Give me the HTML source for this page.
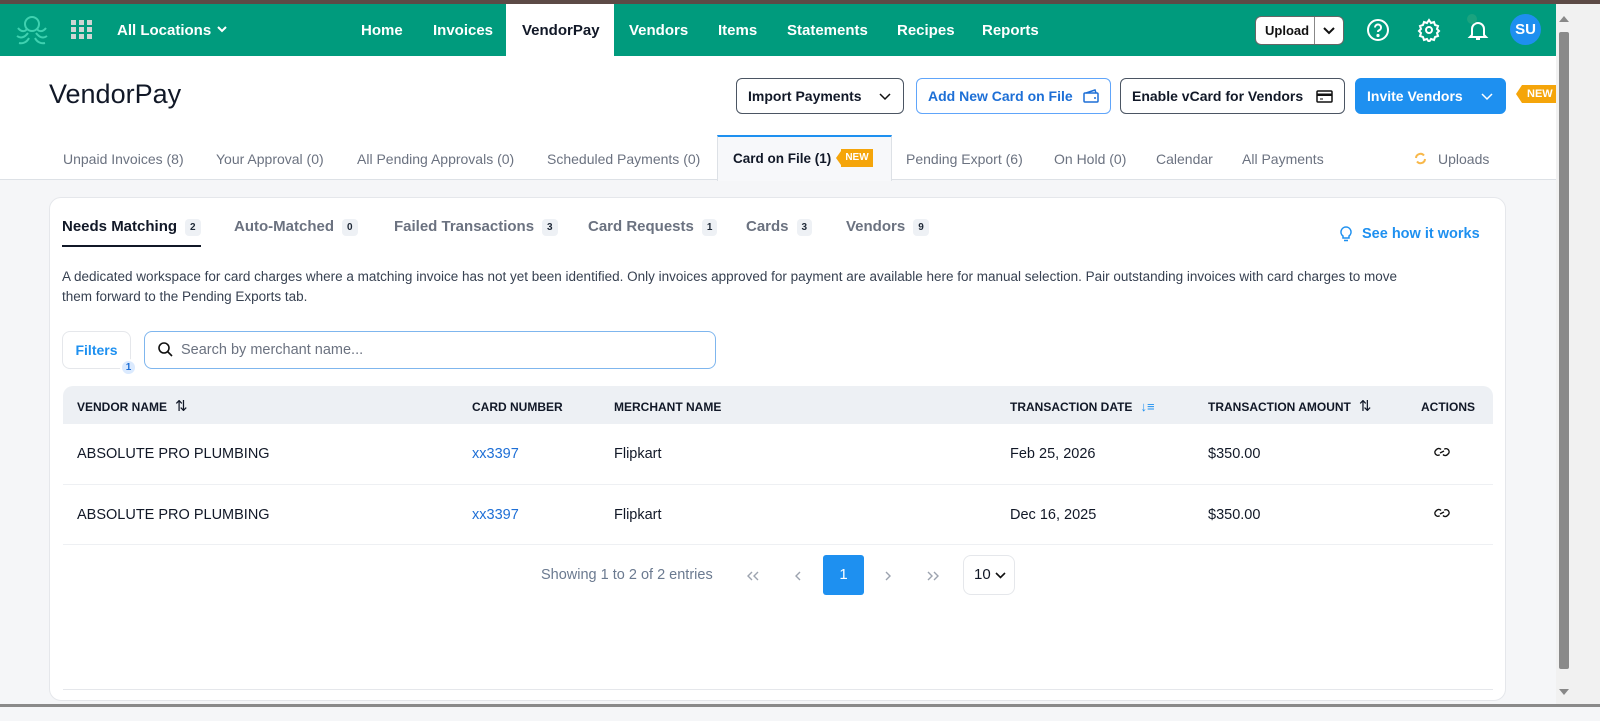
<!DOCTYPE html>
<html><head><meta charset="utf-8"><style>
*{box-sizing:border-box;margin:0;padding:0}
body{width:1600px;height:721px;overflow:hidden;font-family:"Liberation Sans",Arial,sans-serif;background:#f5f6f8;position:relative;color:#1f2937}
.a{position:absolute;white-space:nowrap}
.top{position:absolute;left:0;top:0;width:1600px;height:4px;background:#5c4a46}
.hdr{position:absolute;left:0;top:4px;width:1556px;height:52px;background:#009b7d}
.nav{color:#fff;font-weight:bold;font-size:15px;top:22px}
.white{position:absolute;left:0;top:56px;width:1556px;height:124px;background:#fff;border-bottom:1px solid #dde1e6}
.btn{position:absolute;top:78px;height:36px;border:1px solid #4b5563;border-radius:6px;font-weight:bold;font-size:14px;display:flex;align-items:center;justify-content:space-between;padding:0 11px;background:#fff;color:#111827;white-space:nowrap}
.tab{top:151px;font-size:14px;color:#6b7280}
.card{position:absolute;left:49px;top:197px;width:1457px;height:504px;background:#fff;border:1px solid #e5e7eb;border-radius:12px}
.st{top:218px;font-size:15px;color:#6b7280;font-weight:bold}
.bd{display:inline-block;background:#eef1f5;border-radius:4px;font-size:10px;font-weight:bold;color:#1f2937;padding:3px 5px;margin-left:8px;vertical-align:1px}
.th{font-size:12px;font-weight:bold;color:#111827;top:400px;line-height:14px}
.th span{font-size:15px;font-weight:normal;line-height:14px;vertical-align:top;margin-left:8px}
.td{font-size:14.5px;color:#111827}
.sb{position:absolute;left:1556px;top:4px;width:44px;height:700px;background:#f1f1f1}
</style></head><body>
<div class="top"></div>
<div class="hdr"></div>
<svg class="a" style="left:14px;top:14px" width="36" height="32" viewBox="0 0 36 32" fill="none" stroke="#3fd1b0" stroke-width="2"><circle cx="18" cy="10" r="7"/><path d="M4 14c3 4 7 4 9 1M32 14c-3 4-7 4-9 1M3 22c4 3 8 1 11-3M33 22c-4 3-8 1-11-3M5 29c4 1 8-1 10-5M31 29c-4 1-8-1-10-5"/></svg>
<svg class="a" style="left:71px;top:20px" width="21" height="19" viewBox="0 0 21 19" fill="#cfd5d3"><rect x="0" y="0" width="5" height="5"/><rect x="8" y="0" width="5" height="5"/><rect x="16" y="0" width="5" height="5"/><rect x="0" y="7" width="5" height="5"/><rect x="8" y="7" width="5" height="5"/><rect x="16" y="7" width="5" height="5"/><rect x="0" y="14" width="5" height="5"/><rect x="8" y="14" width="5" height="5"/><rect x="16" y="14" width="5" height="5"/></svg>
<div class="a nav" style="left:117px">All Locations</div>
<svg class="a" style="left:216px;top:25px" width="12" height="8" viewBox="0 0 12 8"><path d="M2 2l4 4 4-4" stroke="#fff" stroke-width="2" fill="none"/></svg>
<div class="a nav" style="left:361px">Home</div>
<div class="a nav" style="left:433px">Invoices</div>
<div class="a" style="left:506px;top:4px;width:108px;height:52px;background:#fff"></div>
<div class="a nav" style="left:522px;color:#111827">VendorPay</div>
<div class="a nav" style="left:629px">Vendors</div>
<div class="a nav" style="left:718px">Items</div>
<div class="a nav" style="left:787px">Statements</div>
<div class="a nav" style="left:897px">Recipes</div>
<div class="a nav" style="left:982px">Reports</div>
<div class="a" style="left:1255px;top:16px;width:89px;height:29px;background:#fff;border-radius:6px;border:1px solid #666;font-size:13px;font-weight:bold;color:#111">
<span class="a" style="left:9px;top:6px">Upload</span><span class="a" style="left:58px;top:0;height:27px;border-left:1px solid #888"></span>
<svg class="a" style="left:66px;top:9px" width="14" height="10" viewBox="0 0 14 10"><path d="M2 2l5 5 5-5" stroke="#111" stroke-width="2" fill="none"/></svg></div>
<svg class="a" style="left:1366px;top:18px" width="24" height="24" viewBox="0 0 24 24" fill="none" stroke="#fff" stroke-width="2"><circle cx="12" cy="12" r="10"/><path d="M9 9.5a3 3 0 1 1 4 2.8c-.8.4-1 1-1 1.7"/><circle cx="12" cy="17.5" r=".6" fill="#fff"/></svg>
<svg class="a" style="left:1417px;top:18px" width="24" height="24" viewBox="0 0 24 24" fill="none" stroke="#fff" stroke-width="2"><circle cx="12" cy="12" r="3"/><path d="M12 2l2 3 3-1 1 3 3 1-1 3 2 2-2 2 1 3-3 1-1 3-3-1-2 3-2-3-3 1-1-3-3-1 1-3-2-2 2-2-1-3 3-1 1-3 3 1z"/></svg>
<svg class="a" style="left:1466px;top:18px" width="24" height="24" viewBox="0 0 24 24" fill="none" stroke="#fff" stroke-width="2"><path d="M6 17V11a6 6 0 0 1 12 0v6l2 2H4zM10 21h4"/></svg>
<div class="a" style="left:1467px;top:14px;width:10px;height:10px;border-radius:5px;background:#1aa37f"></div>
<div class="a" style="left:1510px;top:14px;width:31px;height:31px;border-radius:50%;background:#1e8ff0;color:#fff;font-weight:bold;font-size:15px;text-align:center;line-height:31px">SU</div>
<div class="white"></div>
<div class="a" style="left:49px;top:79px;font-size:27px;color:#111827">VendorPay</div>
<div class="btn" style="left:736px;width:168px">Import Payments <svg width="14" height="9" viewBox="0 0 14 9"><path d="M2 2l5 5 5-5" stroke="#111" stroke-width="1.5" fill="none"/></svg></div>
<div class="btn" style="left:916px;width:195px;border-color:#60a5fa;color:#1d6fd6">Add New Card on File <svg width="16" height="14" viewBox="0 0 16 14" fill="none" stroke="#1d6fd6" stroke-width="1.5"><rect x="1" y="4" width="14" height="9" rx="1"/><path d="M3 4l9-3 1 3M11 9h2"/></svg></div>
<div class="btn" style="left:1120px;width:225px">Enable vCard for Vendors <svg width="17" height="13" viewBox="0 0 17 13"><rect x="1" y="1" width="15" height="11" rx="1" stroke="#111" stroke-width="1.5" fill="none"/><rect x="1" y="3.5" width="15" height="2.5" fill="#111"/><path d="M4 9h3" stroke="#111"/></svg></div>
<div class="btn" style="left:1355px;width:151px;background:#1e90f0;border-color:#1e90f0;color:#fff">Invite Vendors <svg width="14" height="9" viewBox="0 0 14 9"><path d="M2 2l5 5 5-5" stroke="#fff" stroke-width="1.5" fill="none"/></svg></div>
<div class="a" style="left:1516px;top:85px;width:6px;height:0;border-top:9px solid transparent;border-bottom:9px solid transparent;border-right:6px solid #f5a50a"></div>
<div class="a" style="left:1522px;top:85px;width:34px;height:18px;background:#f5a50a;color:#fff;font-size:11px;font-weight:bold;line-height:18px;padding-left:5px">NEW</div>
<div class="a tab" style="left:63px">Unpaid Invoices (8)</div>
<div class="a tab" style="left:216px">Your Approval (0)</div>
<div class="a tab" style="left:357px">All Pending Approvals (0)</div>
<div class="a tab" style="left:547px">Scheduled Payments (0)</div>
<div class="a" style="left:717px;top:135px;width:175px;height:46px;background:#f7f8fa;border:1px solid #dde1e6;border-top:2px solid #1e90f0;border-bottom:none"></div>
<div class="a tab" style="left:733px;color:#111827;font-weight:bold;font-size:13.5px">Card on File (1)</div>
<div class="a" style="left:836px;top:151px;border-top:7px solid transparent;border-bottom:7px solid transparent;border-right:5px solid #f5a50a"></div>
<div class="a" style="left:841px;top:149px;width:32px;height:18px;background:#f5a50a;color:#fff;font-size:10px;font-weight:bold;line-height:18px;text-align:center">NEW</div>
<div class="a tab" style="left:906px">Pending Export (6)</div>
<div class="a tab" style="left:1054px">On Hold (0)</div>
<div class="a tab" style="left:1156px">Calendar</div>
<div class="a tab" style="left:1242px">All Payments</div>
<svg class="a" style="left:1414px;top:152px" width="13" height="13" viewBox="0 0 13 13" fill="none" stroke="#f8b84a" stroke-width="2"><path d="M2 6a4.5 4.5 0 0 1 8-2.5M11 7a4.5 4.5 0 0 1-8 2.5"/></svg>
<div class="a tab" style="left:1438px">Uploads</div>
<div class="card"></div>
<div class="a st" style="left:62px;color:#111827">Needs Matching<span class="bd">2</span></div>
<div class="a" style="left:62px;top:245px;width:139px;height:2px;background:#111827"></div>
<div class="a st" style="left:234px">Auto-Matched<span class="bd">0</span></div>
<div class="a st" style="left:394px">Failed Transactions<span class="bd">3</span></div>
<div class="a st" style="left:588px">Card Requests<span class="bd">1</span></div>
<div class="a st" style="left:746px">Cards<span class="bd">3</span></div>
<div class="a st" style="left:846px">Vendors<span class="bd">9</span></div>
<svg class="a" style="left:1340px;top:226px" width="12" height="16" viewBox="0 0 12 16" fill="none" stroke="#1e90f0" stroke-width="1.5"><path d="M6 1a5 5 0 0 0-3 9v2h6v-2a5 5 0 0 0-3-9zM4 14.5h4"/></svg>
<div class="a" style="left:1362px;top:226px;font-size:14.5px;font-weight:bold;color:#1e90f0">See how it works</div>
<div class="a" style="left:62px;top:267px;font-size:13.5px;color:#374151;line-height:20px">A dedicated workspace for card charges where a matching invoice has not yet been identified. Only invoices approved for payment are available here for manual selection. Pair outstanding invoices with card charges to move<br>them forward to the Pending Exports tab.</div>
<div class="a" style="left:62px;top:331px;width:69px;height:38px;border:1px solid #e5e7eb;border-radius:8px;color:#1e90f0;font-weight:bold;font-size:14px;text-align:center;line-height:36px">Filters</div>
<div class="a" style="left:120px;top:359px;width:17px;height:17px;border-radius:50%;background:#dbeafe;border:2px solid #fff;color:#1e6fd6;font-size:10px;font-weight:bold;text-align:center;line-height:13px">1</div>
<div class="a" style="left:144px;top:331px;width:572px;height:38px;border:1px solid #7fb6ee;border-radius:8px"></div>
<svg class="a" style="left:157px;top:341px" width="16" height="16" viewBox="0 0 16 16" fill="none" stroke="#111" stroke-width="1.6"><circle cx="7" cy="7" r="5"/><path d="M11 11l4 4"/></svg>
<div class="a" style="left:181px;top:342px;font-size:14.5px;color:#6b7280">Search by merchant name...</div>
<div class="a" style="left:63px;top:386px;width:1430px;height:38px;background:#edf0f4;border-radius:10px 10px 0 0"></div>
<div class="a th" style="left:77px">VENDOR NAME<span>&#8645;</span></div>
<div class="a th" style="left:472px">CARD NUMBER</div>
<div class="a th" style="left:614px">MERCHANT NAME</div>
<div class="a th" style="left:1010px">TRANSACTION DATE<span style="color:#1e90f0;font-size:13px">&#8595;&#8801;</span></div>
<div class="a th" style="left:1208px">TRANSACTION AMOUNT<span>&#8645;</span></div>
<div class="a th" style="left:1421px">ACTIONS</div>
<div class="a" style="left:63px;top:484px;width:1430px;height:1px;background:#eef0f3"></div>
<div class="a" style="left:63px;top:544px;width:1430px;height:1px;background:#eef0f3"></div>
<div class="a td" style="left:77px;top:446px">ABSOLUTE PRO PLUMBING</div>
<div class="a td" style="left:472px;top:446px;color:#1e6fd6">xx3397</div>
<div class="a td" style="left:614px;top:446px">Flipkart</div>
<div class="a td" style="left:1010px;top:446px">Feb 25, 2026</div>
<div class="a td" style="left:1208px;top:446px">$350.00</div>
<svg class="a" style="left:1434px;top:446px" width="16" height="12" viewBox="0 0 16 12" fill="none" stroke="#111" stroke-width="1.4"><path d="M7 3.5a3 3 0 0 0-4.5 0l-1 1a3 3 0 0 0 4.2 4.2M9 8.5a3 3 0 0 0 4.5 0l1-1a3 3 0 0 0-4.2-4.2M6 7l4-2"/></svg>
<div class="a td" style="left:77px;top:507px">ABSOLUTE PRO PLUMBING</div>
<div class="a td" style="left:472px;top:507px;color:#1e6fd6">xx3397</div>
<div class="a td" style="left:614px;top:507px">Flipkart</div>
<div class="a td" style="left:1010px;top:507px">Dec 16, 2025</div>
<div class="a td" style="left:1208px;top:507px">$350.00</div>
<svg class="a" style="left:1434px;top:507px" width="16" height="12" viewBox="0 0 16 12" fill="none" stroke="#111" stroke-width="1.4"><path d="M7 3.5a3 3 0 0 0-4.5 0l-1 1a3 3 0 0 0 4.2 4.2M9 8.5a3 3 0 0 0 4.5 0l1-1a3 3 0 0 0-4.2-4.2M6 7l4-2"/></svg>
<div class="a" style="left:541px;top:567px;font-size:14.5px;color:#6b7a90">Showing 1 to 2 of 2 entries</div>
<svg class="a" style="left:746px;top:570px" width="14" height="12" viewBox="0 0 14 12" fill="none" stroke="#9ca3af" stroke-width="1.4"><path d="M6 2L2 6l4 4M12 2L8 6l4 4"/></svg>
<svg class="a" style="left:794px;top:570px" width="8" height="12" viewBox="0 0 8 12" fill="none" stroke="#9ca3af" stroke-width="1.4"><path d="M6 2L2 6l4 4"/></svg>
<div class="a" style="left:823px;top:555px;width:41px;height:40px;background:#1e90f0;border-radius:3px;color:#fff;font-size:15px;text-align:center;line-height:40px">1</div>
<svg class="a" style="left:884px;top:570px" width="8" height="12" viewBox="0 0 8 12" fill="none" stroke="#9ca3af" stroke-width="1.4"><path d="M2 2l4 4-4 4"/></svg>
<svg class="a" style="left:926px;top:570px" width="14" height="12" viewBox="0 0 14 12" fill="none" stroke="#9ca3af" stroke-width="1.4"><path d="M2 2l4 4-4 4M8 2l4 4-4 4"/></svg>
<div class="a" style="left:963px;top:555px;width:52px;height:40px;border:1px solid #e5e7eb;border-radius:8px;font-size:15px;color:#111827;line-height:38px;padding-left:10px">10</div>
<svg class="a" style="left:994px;top:571px" width="13" height="9" viewBox="0 0 13 9"><path d="M2 2l4.5 4.5L11 2" stroke="#111" stroke-width="1.6" fill="none"/></svg>
<div class="a" style="left:63px;top:689px;width:1430px;height:1px;background:#e5e7eb"></div>
<div class="sb"></div>
<div class="a" style="left:1559px;top:32px;width:10px;height:637px;background:#8a8a8a;border-radius:2px"></div>
<div class="a" style="left:1559px;top:16px;border-left:5px solid transparent;border-right:5px solid transparent;border-bottom:6px solid #888"></div>
<div class="a" style="left:1559px;top:689px;border-left:5px solid transparent;border-right:5px solid transparent;border-top:6px solid #888"></div>
<div class="a" style="left:0;top:704px;width:1600px;height:17px;background:#f5f6f8;border-top:3px solid #8a8a8a"></div>
</body></html>
